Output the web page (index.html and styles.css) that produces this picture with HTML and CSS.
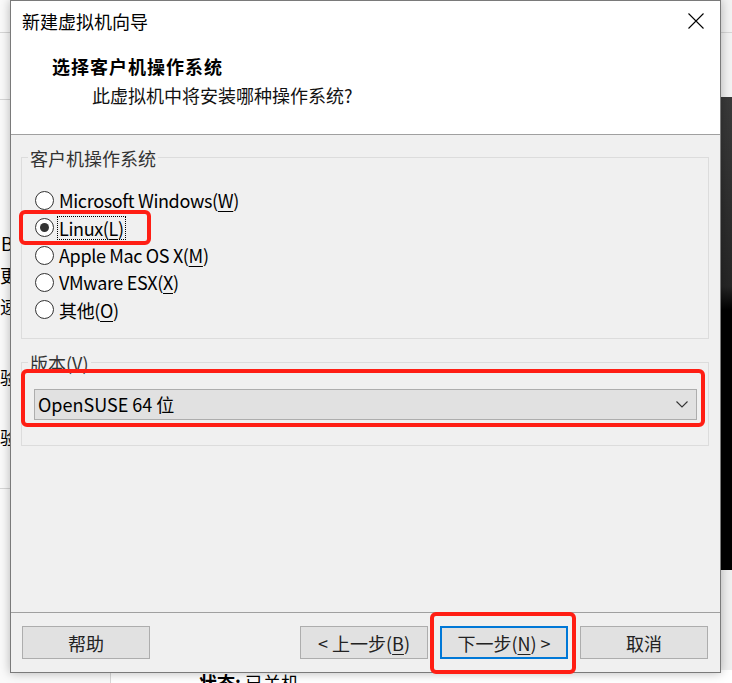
FILE: index.html
```html
<!DOCTYPE html>
<html lang="zh-CN">
<head>
<meta charset="utf-8">
<title>新建虚拟机向导</title>
<link rel="stylesheet" href="styles.css">
</head>
<body>
<div class="desktop">
  <div class="app">
    <aside class="sidebar">
      <div class="side-top"></div>
      <div class="side-sec"></div>
      <div class="side-list">
        <span class="side-item s1">B</span>
        <span class="side-item s2">更用</span>
        <span class="side-item s3">速度</span>
        <span class="side-item s4">验证</span>
        <span class="side-item s5">验证</span>
      </div>
      <div class="side-sec2"></div>
    </aside>
    <main class="main">
      <div class="toolbar"><div class="toolbar-row"></div></div>
      <div class="preview"></div>
      <div class="status"><b>状态:</b> 已关机</div>
    </main>
  </div>

  <div class="dialog">
    <div class="titlebar">
      <span class="title">新建虚拟机向导</span>
      <svg class="close" width="16" height="16" viewBox="0 0 16 16"><path d="M0.5 0.5 L15.5 15.5 M15.5 0.5 L0.5 15.5" stroke="#000" stroke-width="1.1" fill="none"/></svg>
    </div>
    <div class="header">
      <div class="h-title">选择客户机操作系统</div>
      <div class="h-sub">此虚拟机中将安装哪种操作系统?</div>
    </div>
    <div class="body">
      <fieldset class="group group-os">
        <legend>客户机操作系统</legend>
        <div class="radios">
          <div class="radio"><span class="dot"></span><span class="lbl">Microsoft Windows(<u>W</u>)</span></div>
          <div class="radio checked"><span class="dot"></span><span class="lbl focus">Linux(<u>L</u>)</span></div>
          <div class="radio"><span class="dot"></span><span class="lbl">Apple Mac OS X(<u>M</u>)</span></div>
          <div class="radio"><span class="dot"></span><span class="lbl">VMware ESX(<u>X</u>)</span></div>
          <div class="radio"><span class="dot"></span><span class="lbl">其他(<u>O</u>)</span></div>
        </div>
      </fieldset>
      <fieldset class="group group-ver">
        <legend>版本(V)</legend>
        <div class="select">
          <span>OpenSUSE 64 位</span>
          <svg width="12" height="7" viewBox="0 0 12 7"><path d="M0.5 0.5 L6 6 L11.5 0.5" stroke="#333" stroke-width="1.1" fill="none"/></svg>
        </div>
      </fieldset>
    </div>
    <div class="footer">
      <button class="btn">帮助</button>
      <div class="nav">
        <button class="btn">&lt; 上一步(<u>B</u>)</button>
        <button class="btn primary">下一步(<u>N</u>) &gt;</button>
        <button class="btn">取消</button>
      </div>
    </div>

    <div class="mark mark-linux"></div>
    <div class="mark mark-ver"></div>
    <div class="mark mark-next"></div>
  </div>
</div>
</body>
</html>
```

FILE: styles.css
```css
* { box-sizing: border-box; }
html, body { margin: 0; padding: 0; }
body {
  font-family: "Noto Sans CJK SC", "Noto Sans", sans-serif;
  color: #000;
  background: #f0f0f0;
}
.desktop {
  position: relative;
  width: 732px;
  height: 683px;
  overflow: hidden;
  background: #f0f0f0;
}
.app {
  display: grid;
  grid-template-columns: 111px 1fr;
  height: 683px;
}
.sidebar {
  background: #fafafa;
  border-right: 1px solid #d8d8d8;
  display: flex;
  flex-direction: column;
}
.side-top { height: 33px; border-bottom: 1px solid #d6d6d6; }
.side-sec { height: 67px; border-bottom: 1px solid #d6d6d6; }
.side-list {
  display: flex;
  flex-direction: column;
  height: 389px;
  border-bottom: 1px solid #d6d6d6;
  font-size: 18px;
  line-height: 24px;
}
.side-item { white-space: nowrap; }
.s1 { margin: 131px 0 0 1px; }
.s2 { margin: 8px 0 0 0; }
.s3 { margin: 7px 0 0 0; }
.s4 { margin: 47px 0 0 0; }
.s5 { margin: 36px 0 0 0; }
.main { display: flex; flex-direction: column; }
.toolbar { height: 97px; background: #f3f3f3; }
.toolbar-row { height: 33px; border-bottom: 1px solid #d6d6d6; }
.preview {
  height: 473px;
  margin-left: 420px;
  background: linear-gradient(#3a3a3a 0%, #262626 40%, #000 45%, #000 100%);
}
.status {
  padding: 0 0 0 88px;
  font-size: 18px;
  line-height: 24px;
  margin-top: 100px;
  background: #fff;
}

/* dialog window */
.dialog {
  position: absolute;
  left: 10px;
  top: 0;
  width: 711px;
  height: 673px;
  border: 1px solid #7a7a7a;
  background: #f0f0f0;
  box-shadow: 0 0 10px rgba(0,0,0,0.28);
  display: flex;
  flex-direction: column;
}
.titlebar {
  height: 44px;
  background: #fff;
  display: flex;
  align-items: center;
  justify-content: space-between;
  padding: 0 16px 4px 11px;
}
.title { font-size: 18px; line-height: 24px; }
.close { display: block; margin-top: 1px; }
.header {
  height: 90px;
  background: #fff;
  border-bottom: 1px solid #a0a0a0;
  padding: 9px 0 0 41px;
}
.h-title {
  font-size: 18px;
  line-height: 24px;
  font-weight: 700;
  letter-spacing: 1px;
}
.h-sub {
  font-size: 18px;
  line-height: 24px;
  margin: 5px 0 0 40px;
  color: #111;
}
.body {
  height: 478px;
  padding: 11px 11px 0 10px;
  display: flex;
  flex-direction: column;
  gap: 12px;
}
.group {
  margin: 0;
  padding: 0;
  border: 1px solid #dcdcdc;
  min-width: 0;
}
.group legend {
  margin-left: 6px;
  padding: 0 2px;
  font-size: 18px;
  line-height: 24px;
  color: #333;
}
.group-os { height: 193px; }
.radios {
  display: flex;
  flex-direction: column;
  padding: 17px 0 0 13px;
}
.radio {
  display: flex;
  align-items: center;
  height: 27.3px;
  font-size: 18px;
  letter-spacing: -0.35px;
}
.dot {
  width: 19px;
  height: 19px;
  border: 1px solid #333;
  border-radius: 50%;
  background: #fff;
  display: flex;
  align-items: center;
  justify-content: center;
  flex: none;
}
.checked .dot::after {
  content: "";
  width: 9px;
  height: 9px;
  border-radius: 50%;
  background: #333;
}
.lbl {
  margin-left: 3px;
  line-height: 22px;
  padding: 0 1px;
  border: 1px dotted transparent;
}
.lbl.focus { border-color: #000; }
.lbl u { text-decoration-thickness: 1px; text-underline-offset: 3px; }
.group-ver { height: 95px; }
.select {
  height: 31px;
  margin: 14px 11px 0 12px;
  background: #e1e1e1;
  border: 1px solid #adadad;
  display: flex;
  align-items: center;
  justify-content: space-between;
  padding: 0 8px 0 3px;
  font-size: 18px;
}
.footer {
  border-top: 1px solid #a0a0a0;
  height: 60px;
  padding: 13px 12px 0 11px;
  display: flex;
  justify-content: space-between;
  align-items: flex-start;
}
.nav { display: flex; gap: 12px; }
.btn {
  width: 128px;
  height: 33px;
  background: #e1e1e1;
  border: 1px solid #adadad;
  font-family: "Noto Sans CJK SC", "Noto Sans", sans-serif;
  font-size: 18px;
  color: #222;
  padding: 0;
  line-height: 24px;
}
.btn u { text-decoration-thickness: 1px; text-underline-offset: 3px; }
.btn.primary { border: 2px solid #0078d7; }

/* red annotation marks */
.mark {
  position: absolute;
  border: 4px solid #ff1e14;
  border-radius: 6px;
}
.mark-linux { left: 8px; top: 209px; width: 132px; height: 35px; }
.mark-ver { left: 10px; top: 368px; width: 684px; height: 58px; }
.mark-next { left: 419px; top: 611px; width: 146px; height: 62px; }
```
